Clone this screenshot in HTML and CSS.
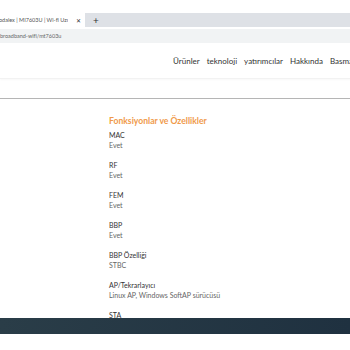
FILE: index.html
```html
<!DOCTYPE html>
<html lang="tr">
<head>
    <meta charset="UTF-8">
    <title>MT7603U</title>
    <link rel="stylesheet" href="styles.css">
</head>
<body>
    <div class="tabs">
        <div class="tab">
            <span class="tab-title">odaiex | MI7603U | Wi-fi Uzı</span>
            <span class="tab-close">✕</span>
        </div>
        <span class="tab-new">+</span>
    </div>
    <div class="address">broadband-wifi/mt7603u</div>

    <nav class="nav">
        <a>Ürünler</a>
        <a>teknoloji</a>
        <a>yatırımcılar</a>
        <a>Hakkında</a>
        <a>Basma</a>
    </nav>

    <div class="divider"></div>

    <section class="specs">
        <h2>Fonksiyonlar ve Özellikler</h2>
        <div class="spec"><div class="label">MAC</div><div class="value">Evet</div></div>
        <div class="spec"><div class="label">RF</div><div class="value">Evet</div></div>
        <div class="spec"><div class="label">FEM</div><div class="value">Evet</div></div>
        <div class="spec"><div class="label">BBP</div><div class="value">Evet</div></div>
        <div class="spec"><div class="label">BBP Özelliği</div><div class="value">STBC</div></div>
        <div class="spec"><div class="label">AP/Tekrarlayıcı</div><div class="value">Linux AP, Windows SoftAP sürücüsü</div></div>
        <div class="spec last"><div class="label">STA</div></div>
    </section>

    <footer class="footer"></footer>
</body>
</html>
```

FILE: styles.css
```css
/* --- GENERALE --- */
body, html {
    margin: 0;
    padding: 0;
    width: 100%;
    height: 100%;
    overflow: hidden;
    background: #fff;
    font-family: Lato, "Open Sans", sans-serif;
}

/* --- BROWSER CHROME --- */
.tabs {
    margin-top: 13px;
    height: 14px;
    background: #dee1e6;
    display: flex;
    align-items: center;
}

.tab {
    width: 85px;
    height: 100%;
    background: #fff;
    display: flex;
    align-items: center;
    justify-content: space-between;
    padding-right: 4px;
    box-sizing: border-box;
    font-size: 5.5px;
    color: #555;
}

.tab-title {
    white-space: nowrap;
    overflow: hidden;
    margin-left: -1px;
}

.tab-close {
    font-size: 6px;
    color: #333;
}

.tab-new {
    margin-left: 8px;
    font-size: 10px;
    color: #333;
    line-height: 1;
}

.address {
    margin-top: 2px;
    height: 14px;
    background: #f1f3f4;
    font-size: 5.5px;
    color: #666;
    line-height: 14px;
    white-space: nowrap;
}

/* --- NAV --- */
.nav {
    height: 35px;
    display: flex;
    justify-content: flex-end;
    align-items: center;
    gap: 7px;
    margin-right: -3px;
    font-size: 8px;
    color: #333;
    border-bottom: 1px solid #f2f2f2;
    box-shadow: 0 1px 2px rgba(0, 0, 0, 0.03);
    white-space: nowrap;
}

.divider {
    margin-top: 19px;
    height: 1px;
    background: #b5b5b5;
}

/* --- SPECIFICHE --- */
.specs {
    padding-left: 109px;
    padding-top: 17px;
    height: 219px;
    overflow: hidden;
    box-sizing: border-box;
}

.specs h2 {
    margin: 0 0 4px;
    font-size: 8.6px;
    font-weight: bold;
    color: #f09a4a;
    line-height: 10px;
}

.spec {
    height: 30px;
    font-size: 7px;
    line-height: 10px;
}

.spec.last {
    height: 10px;
}

.label {
    color: #333;
}

.value {
    color: #666;
}

/* --- FOOTER --- */
.footer {
    height: 16px;
    background: linear-gradient(90deg, #2a3d48, #1f3140);
}
```
